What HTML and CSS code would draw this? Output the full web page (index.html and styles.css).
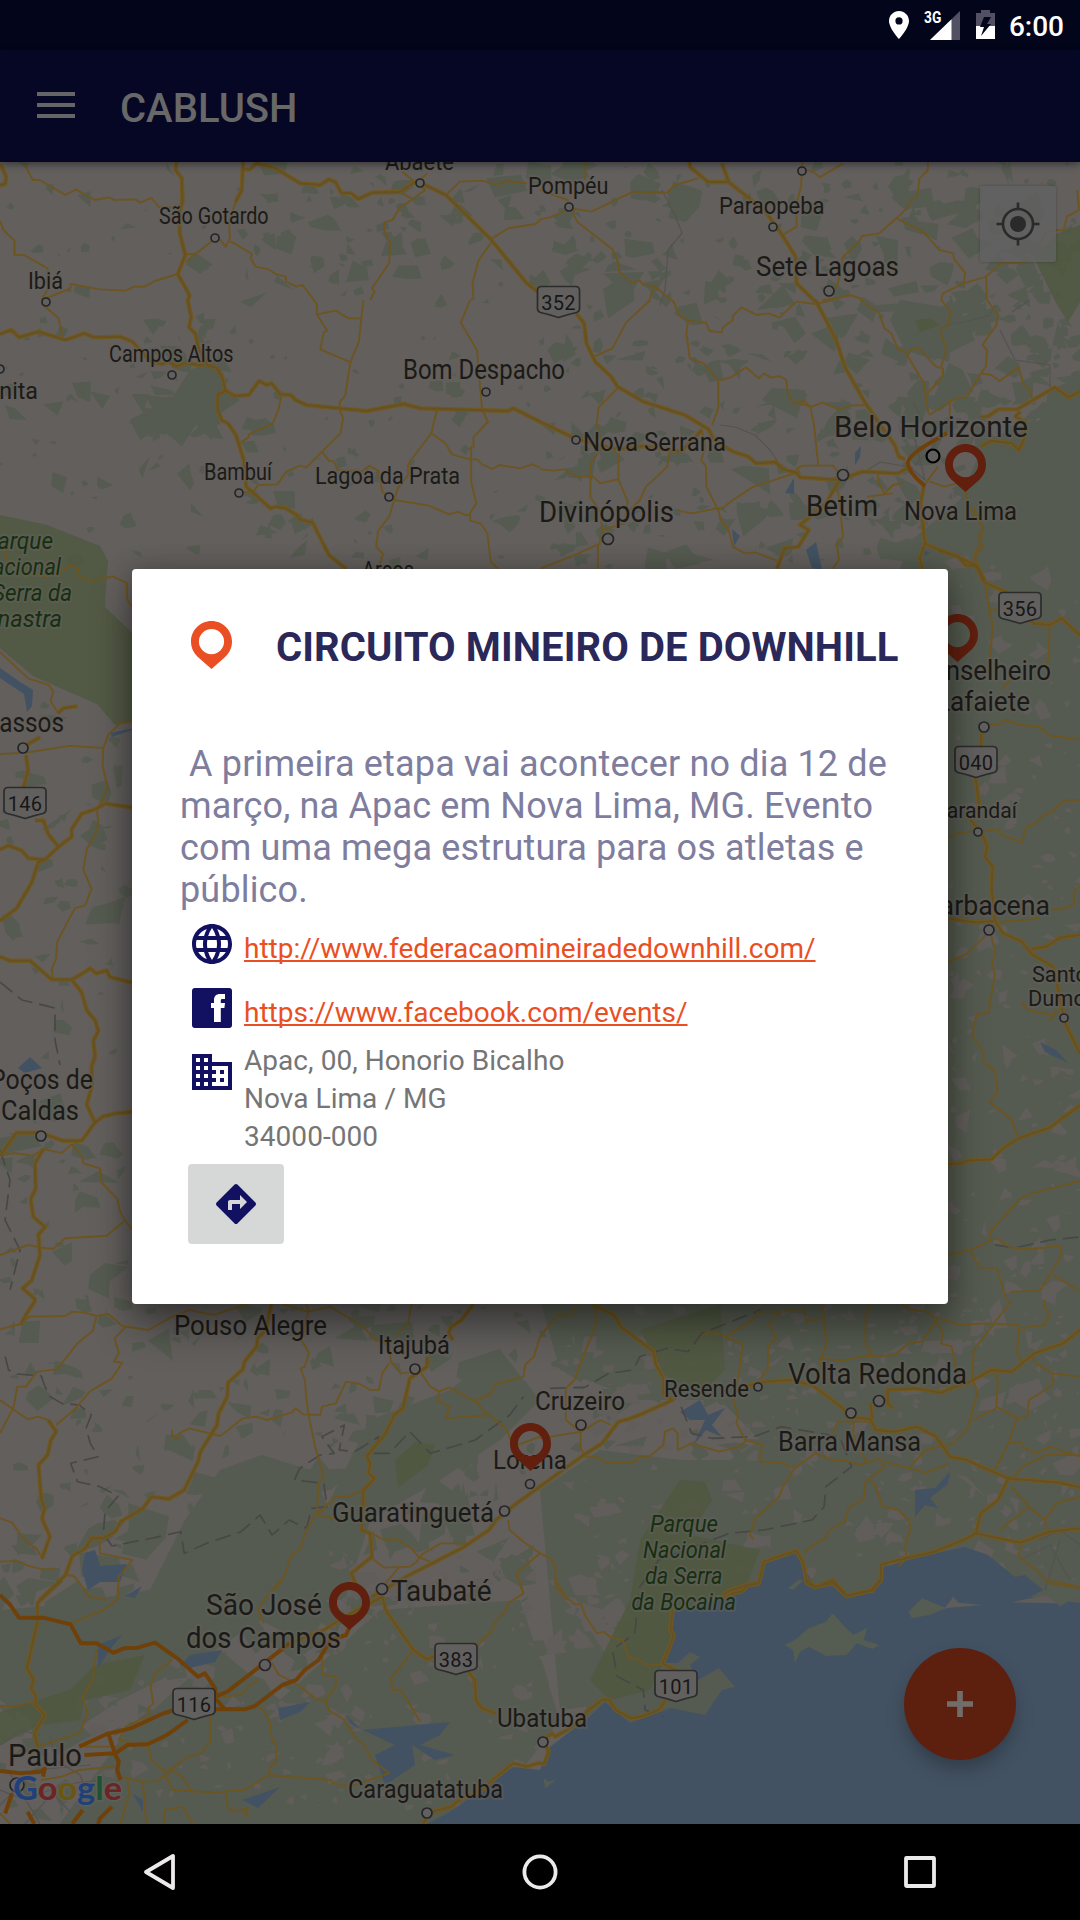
FILE: index.html
```html
<!DOCTYPE html>
<html lang="pt-BR">
<head>
<meta charset="utf-8">
<title>Cablush</title>
<link rel="stylesheet" href="styles.css">
</head>
<body>
<div class="screen">
  <header class="status-bar">
    <svg class="st-pin" viewBox="0 0 20 28"><path d="M10 0C4.5 0 0 4.4 0 9.900c0 7.200 10 18.100 10 18.100s10-10.900 10-18.100C20 4.400 15.500 0 10 0zm0 13.500a3.600 3.600 0 1 1 0-7.200 3.600 3.600 0 0 1 0 7.200z"/></svg>
    <div class="signal">
      <span class="net">3G</span>
      <svg viewBox="0 0 30 29"><path class="faint" d="M30 0v29H0z"/><path d="M21.500 8.200V29H0z"/></svg>
    </div>
    <svg class="battery" viewBox="0 0 19 29"><path class="faint" d="M0 3h5V0h9v3h5v13H0z"/><path d="M0 16h19v13H0z"/><path class="bolt" d="M8 7h7l-4 7h4L5 26l3-9H4z"/></svg>
    <span class="clock">6:00</span>
  </header>
  <header class="toolbar">
    <span class="menu"><i></i><i></i><i></i></span>
    <h1>CABLUSH</h1>
  </header>

  <main class="map">
    <svg class="map-canvas" viewBox="0 162 1080 1662">
      <defs>
        <path id="pin" fill-rule="evenodd" d="M0-48c-11.300 0-20.500 9.200-20.500 20.500 0 7.500 3.500 12.500 8 16.500L0 0l12.500-11c4.500-4 8-9 8-16.500C20.500-38.800 11.300-48 0-48zm0 8a12.600 12.600 0 1 1 0 25.200 12.600 12.600 0 0 1 0-25.200z"/>
        <path id="shield" d="M4 0H38Q42 0 42 4V22Q42 25 39 26Q30 28 21 31Q12 28 3 26Q0 25 0 22V4Q0 0 4 0Z"/>
        <g id="major-roads">
          <g transform="scale(.34439 .33333)">
            <path d="M0 490L18 530 15 552 0 556M512 486L510 510 528 535 530 605 520 640 522 700 538 765 516 822 550 885 545 905M706 486L702 570 684 605M702 508L725 508 745 490 800 505 872 550 930 555 955 538 975 547 990 578 1020 580 1040 597 1080 578 1160 576 1210 543M1210 543L1295 585 1425 718 1530 850 1568 880"/>
          </g>
          <g transform="translate(540 0) scale(.34439 .33333)">
            <path d="M435 486V500L488 546H548L528 490M548 546L655 635 700 700 742 770 745 850 800 905"/>
          </g>
          <g transform="translate(0 300) scale(.34439 .33333)">
            <path d="M0 102L32 90 56 112 112 95 190 120 245 100 272 112 350 110 385 125 410 155 440 185 470 192 490 185 512 200 535 190 585 195 603 180M545 0L555 50 549 82 568 102 575 140 603 195 630 205 645 230 655 272 632 285V330L645 362 662 370 685 405 708 480 715 560 785 625 800 620 830 625 862 645 868 657 908 668 955 765 1005 806M655 272L682 288 722 285 752 243 775 255 788 250 815 283 845 285 858 300 890 315 985 325 1065 333 1172 312 1220 325 1475 333 1490 325 1568 365"/>
          </g>
          <g transform="translate(540 300) scale(.34439 .33333)">
            <path d="M105 40L128 70 135 130 160 185 205 228 225 260 300 305 420 345 490 388 505 420 560 455 605 470 628 490 685 486 705 508 745 518 755 532 870 540 935 515 1040 520 1065 505M0 365L95 412 180 438 225 448 300 438 410 455 470 390M800 0L860 120 885 200 945 310 985 370 1030 435 1042 470 1060 478M870 540L830 610 755 675 780 690 750 740 710 745 688 806M1115 555L1105 610 1118 730 1170 755 1215 770 1235 795 1270 800 1290 840M1118 730L1103 775 1110 806M1280 350H1300L1330 328H1385L1495 262 1535 292 1568 275M1395 335L1380 350 1410 365 1405 420 1390 450 1370 430 1310 422 1280 440"/>
          </g>
          <g transform="translate(0 500) scale(.33333 .5102)">
            <path d="M80 480L120 465M78 500L84 530 70 565M105 628H130L145 655 175 680 215 660V645L245 615 290 605 315 595 420 605M175 680L135 705 115 710 95 750 50 800 0 825M0 685L25 677 65 687 85 702 135 705M0 895L30 903H90L155 940H215L255 925 270 918 290 928 320 922 330 935 390 945 420 950M215 940L245 965 260 1000 285 1020 295 1040 280 1060 285 1090 275 1110V1150L260 1185 285 1220 245 1256H190L120 1240 50 1240 0 1285M285 1220L310 1208 350 1202 420 1198M130 1272L105 1300 107 1350 92 1370 100 1405 135 1425 115 1440 120 1480 95 1530 68 1545 108 1568M175 418L190 408 232 404"/>
          </g>
          <g transform="translate(940 500) scale(.33333 .5102)">
            <path d="M0 98L40 108 110 128 135 162 215 185 280 242 330 245 365 232 420 265M125 450L122 490M107 545L117 595 110 620M90 625L130 660 142 680 135 700 158 718 155 760 165 825 190 850 245 865 275 890 340 915M275 880L320 875 360 858 420 852M160 825L105 828 25 820M340 915L355 960 375 1025 420 1085M25 1302L65 1300 80 1295 155 1292 190 1270 240 1250 330 1230 370 1210 420 1187M110 130L130 160"/>
          </g>
          <g transform="translate(0 1300) scale(.34439 .33333)">
            <path d="M103 0L75 45 60 75M788 12L772 90 748 115 745 140 710 185 705 208 662 248 660 290 635 340 630 375 582 455 575 485 535 570 490 597 440 590 415 625 350 665 335 695 300 715H265L248 745 210 768 190 825 115 900M140 360L163 395 148 420 138 465 112 495 120 600 130 625 122 655 145 710 122 775M1375 12L1340 60 1310 80 1303 100 1315 120M1240 170L1240 200 1190 235 1170 325 1145 345 1120 400 1065 468 1075 490 1070 520 1088 535 1055 570 1050 690 1075 700 1080 770 1020 820 1040 870M1568 560L1500 610 1440 660 1420 690 1340 745 1180 830 1080 890"/>
          </g>
          <g transform="translate(540 1300) scale(.34439 .33333)">
            <path d="M155 15L215 45 235 80 330 155 335 190 358 235V280L385 300 300 340 255 358 228 365 180 430 120 470 0 560M590 260L655 245 730 240 790 255 880 325 895 350 960 358 975 390 1030 395 1095 380 1150 410 1190 470 1240 480 1270 495 1360 535 1510 548 1568 562M1568 90L1520 130 1435 160 1370 215 1310 210 1240 250 1200 262 1165 278 1090 265 1045 268 1010 268V310L1025 325M1360 535L1330 600 1280 640 1265 700 1395 728 1480 695 1568 685M1265 700L1240 715 1145 755 1020 785 990 795V840L965 870 890 888 850 840 800 862 775 850 765 790 745 752 650 785 635 850 605 855 585 875 560 880 530 895M965 355L960 310"/>
          </g>
          <g transform="translate(0 1580) scale(.34439 .33333)">
            <path d="M180 0L108 70 110 120 78 265 98 300 90 325 103 345V375L130 405 100 460 110 500M1110 50L1120 90 1200 210 1240 238 1270 225M1360 275L1378 300 1382 360 1400 385 1440 400M1568 548L1530 560 1490 550 1430 600 1400 630 1340 655 1310 680 1240 700 1230 732M1110 50L1010 105 940 150 840 190"/>
          </g>
          <g transform="translate(540 1580) scale(.34439 .33333)">
            <path d="M385 90L378 150 388 165 375 205 355 250 395 270M365 360L345 390 300 408 265 415 220 390 200 358 180 360 135 395 110 430 45 470 35 460 10 480 25 515 12 552 0 550M530 45L555 30 600 15 635 12M775 0L800 20 850 10 890 48 965 30 985 0"/>
          </g>
        </g>
      </defs>

      <rect class="land" y="162" width="1080" height="1662"/>
      <g class="veg">
        <path d="M1080 380V1824H560L620 1560 700 1480 760 1440 660 1340 700 1304 948 1300V569L900 569 912 540 960 500 985 440 1040 420 1050 390Z"/>
        <path d="M185 1520L220 1470 262 1455 310 1470 340 1530 325 1600 300 1640 260 1620 200 1660 120 1700 60 1740 0 1700V1610L60 1605 150 1590Z"/>
        <path d="M330 1500L370 1420 450 1390 500 1350 540 1400 500 1440 440 1480 370 1520 345 1600 310 1600Z"/>
        <path d="M540 1300H720L740 1400 640 1400 560 1370ZM540 1490L600 1450 680 1460 760 1460 780 1500 740 1580 640 1700 560 1710Z"/>
        <path d="M60 1824L120 1740 220 1650 280 1700 380 1610 520 1600 560 1720 480 1824Z"/>
        <path d="M190 370L215 360 225 390 240 400 222 412 212 440 196 425 182 446 160 428 140 440 130 420 152 408 145 395 172 398Z"/>
        <path d="M900 300L960 310 975 340 935 360 905 350 890 320Z"/>
      </g>
      <g id="foliage"></g>
      <g class="park">
        <path d="M0 515L47 525 100 546 108 561 106 588 105 607 140 640V720L115 725 97 704 67 691 33 676 0 648Z"/>
        <path d="M1080 225L1056 234 1035 260 1056 303 1068 322 1080 302Z"/>
        <path d="M915 320L930 318 940 325 920 332Z"/>
        <path d="M640 1330L720 1304 725 1370 700 1395 665 1375Z"/>
        <path d="M395 1460L415 1442 435 1445 428 1465 398 1488Z"/>
        <path d="M145 1655L130 1690 85 1700 80 1720 40 1725 0 1745V1712L70 1690 95 1665Z"/>
        <path d="M680 1480L705 1482 712 1500 690 1535 760 1550 745 1590 700 1600 675 1640 650 1690 610 1700 590 1680 630 1600 640 1540Z"/>
      </g>
      <path class="water" d="M427 1824L448 1813 492 1783 513 1767 540 1770 550 1747 568 1733 586 1720 605 1702 630 1723 671 1708 705 1715 722 1690 735 1687 719 1668 698 1680 690 1665 700 1657 690 1652 678 1663 662 1663 673 1643V1613L726 1597 747 1583 762 1580 764 1563 795 1552 807 1573 815 1587 833 1580 846 1595 874 1593 884 1567 919 1557 965 1547 988 1555 1015 1577 1025 1575 1043 1590 1030 1597 1080 1603V1824Z"/>
      <g class="water">
        <path d="M85 1553L95 1550 100 1566 127 1564 120 1582 100 1582 88 1590 82 1570ZM125 1596L142 1586 135 1598Z"/>
        <path d="M98 1645L122 1635 112 1647 98 1668ZM180 1665L190 1655 222 1650 215 1662 190 1668ZM278 1708L310 1702 300 1712 280 1720Z"/>
        <path d="M345 1714L362 1730 450 1722 440 1735 420 1745 455 1755 435 1760 412 1745 415 1765 385 1785 375 1755 395 1745 352 1725ZM242 1800L280 1787 258 1808Z"/>
        <path d="M680 1412L700 1400 708 1415 725 1408 712 1425 722 1437 706 1430 694 1444 705 1420 690 1420ZM915 1490L935 1488 950 1472 948 1484 930 1498 938 1508 925 1505 915 1517Z"/>
        <path d="M0 668L20 682 33 690 32 706 27 712 24 694 0 678ZM18 1068L30 1057 42 1068 25 1073ZM110 733L140 727 112 737ZM1040 1042L1056 1050 1068 1063 1045 1052Z"/>
        <path d="M855 453L861 446 860 457 855 465ZM785 493L794 478V494ZM806 550L816 542 822 570 812 568ZM732 529L740 536 734 546ZM923 550L930 553 925 556ZM133 1794L143 1800V1812Z"/>
      </g>
      <g class="island" transform="translate(540 1580) scale(.34439 .33333)">
        <path d="M710 195L740 180 780 145 830 125 850 100 885 140 910 165 950 143 940 180 985 195 965 207 920 190 890 225 830 228 780 200 755 215 740 250 735 210ZM1070 95L1110 55 1180 85 1130 105 1080 115ZM10 595L25 605 48 598 15 625ZM720 25L750 0H765L735 30ZM1470 0H1568V40L1510 80 1500 65 1470 45Z"/>
        <path class="sand" d="M1175 85L1200 50 1215 68 1285 75ZM1368 67L1470 45 1505 70Z"/>
      </g>
      <g class="border">
        <g transform="translate(0 1300) scale(.34439 .33333)"><path d="M15 170L25 210 50 222 120 228 130 258 145 290 180 310 230 315 265 345 250 385 262 430 285 470 205 490 225 545 290 560 343 588 305 635 300 700 325 738 440 715 525 695 535 760 600 730 700 695 755 645 790 705 840 660 890 685 905 625 950 620 940 550 855 540 870 505 930 465 970 460 935 410 1000 375 985 450 1030 455 1100 410 1085 460H1130L1190 395 1250 460 1380 420 1480 345 1520 290"/></g>
        <g transform="translate(540 1300) scale(.34439 .33333)"><path d="M30 265L130 262 200 220 270 210 290 170 370 145 430 155 470 100 640 30M410 320L440 400 500 415 620 410 700 380 870 410 905 500 830 560 825 620 790 660 650 690 550 700 345 780 290 860 275 1000 210 1050 225 1130 300 1170 305 1230 360 1250"/></g>
        <path d="M0 982L22 1000 55 1008 55 1040 60 1065M0 1150L10 1180 5 1220 20 1250 10 1290M995 1245L1015 1248 1050 1240 1080 1237"/>
      </g>
      <g class="lane">
        <path d="M662 190L675 215 682 233 668 250 665 290 660 305M720 425L735 427 755 435 770 450 778 462M860 475L880 462 910 467 925 480 915 440M945 325L965 322 990 315 995 305M1000 330L1015 360 1050 365V390M1012 312L1030 300M913 402L935 445 915 465"/>
        <path d="M1 1745L20 1730 40 1735M50 1735L55 1760 80 1775 90 1800M0 1790L25 1800 50 1790 70 1812M8 1770L40 1824M0 1805L35 1770 90 1765M25 1824L60 1785 100 1780M1040 1540L1060 1530 1080 1545M1020 1560L1050 1545 1070 1580M1060 1540L1045 1590"/>
      </g>
      <g class="minor">
        <g transform="scale(.34439 .33333)"><path d="M70 490L95 540H115L190 585 220 568 275 600 318 592 332 600 392 598 408 608 440 594 462 622H520M0 662L10 690 42 722V765H70L138 805V870L120 900M122 900L205 865V852L290 868 365 872 390 860H420L450 843 516 822M684 605L665 670 668 715 655 740 640 720 625 715 540 785M540 762H568M668 725L680 730 732 762 728 775 742 800 780 808 800 822 830 830V845L860 860 878 855 912 900M1168 515L1235 570 1160 625 1140 660 1115 668V690L1133 730 1130 790 1080 865 1088 875 1075 900M1165 578L1195 595M1240 520L1215 545M1295 585L1335 545 1400 542 1440 553 1475 543 1530 550M1425 718L1475 685 1555 672 1568 660M1425 730L1390 780 1372 850 1375 900"/></g>
        <g transform="translate(540 0) scale(.34439 .33333)"><path d="M133 486L130 540M0 570L80 600 90 625 150 635 270 575 370 578 390 555 460 535M0 658L30 652 90 625 108 665 210 748 228 790 230 815 265 850 290 842 300 855 332 857 380 900M332 857L318 900M762 486L758 560 745 610V680L705 705M762 510L790 512 812 532 880 490M1126 486V510L1102 535 1095 590 1075 600 1065 625 1035 655 985 700 935 708 925 728 880 770 865 850 842 885M1035 655L1112 695 1160 750 1200 760 1202 775 1235 820 1230 850 1295 830 1340 788 1400 790 1440 755 1470 695 1500 690 1520 692 1530 650 1565 630 1560 570M1230 850L1170 880 1165 900M1295 830L1298 900M820 900L860 895 900 885 935 897"/></g>
        <g transform="translate(0 300) scale(.34439 .33333)"><path d="M120 10L170 55 183 115M910 0L920 12V43L975 32 1012 55H1047M1055 0L1042 125 1018 185 1002 288 987 305V333L997 355 988 400 935 455 890 502 870 497 832 515 805 553 750 555 735 575 705 577M920 43L950 92 940 97 930 148 1018 187M818 285L808 330 792 370 722 403V412L698 428M935 455L955 482 970 485 980 510 1050 515 1072 497 1098 512 1110 575 1145 600 1245 617 1305 643 1330 635 1350 645H1365M1365 0L1338 68 1385 150 1400 330 1417 365 1375 412V440H1368V545L1383 610 1365 640V662L1395 670 1415 700 1425 785 1445 806M1268 333L1252 400 1185 492V525L1155 565 1130 650 1098 692 1092 740 1112 762 1100 800M1252 400L1292 428 1312 463 1365 478 1385 478 1400 493 1430 507 1450 495 1510 505 1545 493 1568 503"/></g>
        <g transform="translate(540 300) scale(.34439 .33333)"><path d="M320 0L250 68 210 145 158 170M385 0L405 45 430 62 425 100 435 175 475 190 518 242V322L500 375M430 62L482 68 492 93 527 97 532 82 560 60V48L585 22 628 45 665 40 695 53 745 5 800 12 850 0M518 242L555 232 598 202 635 235 650 220 672 233 695 228 715 240 718 275 735 307 768 303 785 322 795 370 808 495M735 307L790 320 820 308 870 330 900 317 945 315M225 265L170 322 165 370 180 440 148 490 146 590 178 640 180 710 168 740V806M228 440V540L255 605 245 670 180 690M0 508L40 512 70 508 85 520 110 530H155L175 550 230 537M410 455L375 460 370 500 308 560 290 600 250 640M470 390L480 440 468 480 482 500 483 560 515 625 530 670 548 690 560 740 595 760 625 757 688 782M515 625L440 640 400 632M745 518L620 560 560 600 530 625 505 625M755 520L745 505 765 497H850L870 520M930 0L985 40 1000 85 1020 100 1040 148 1060 155 1115 250 1118 280 1128 340M1065 165L1080 145H1100L1150 200 1170 205V230L1120 285M1165 0L1192 35 1185 75 1162 90 1180 150 1165 200M1298 0L1330 45 1325 75 1285 135 1298 150 1295 200 1280 220 1240 290 1200 300 1130 345M1280 220L1310 225 1335 243 1390 200 1405 258 1420 265 1430 300M0 806L90 770 175 730M865 570L880 710 862 735 868 780 850 806M980 520L985 550 1000 580 1025 555 1055 548M1235 575L1250 630 1285 680 1280 730 1260 765 1270 800M1130 545L1175 560 1210 550M950 590L1025 580M1155 500L1120 550M1190 350V300"/></g>
        <g transform="translate(0 500) scale(.33333 .5102)"><path d="M0 80L22 115 60 140 140 150 185 140 210 128 235 135 238 150 275 158 340 150 380 163 382 195 395 210M0 298L85 350 145 362 160 375 152 395 175 418M0 498L80 495 210 482 310 486 325 460 360 438 420 432M310 486L308 520 323 565 305 590 290 605 295 630 290 650 260 685 250 725 275 762 255 795 225 800 200 830 172 865 168 900 155 920 158 935M0 1285L40 1280 100 1285 130 1272 185 1280 215 1263 245 1285 250 1300 300 1310 305 1338 352 1370 360 1395 375 1412 320 1442 195 1447 160 1468 120 1465 85 1460 0 1480M375 1412L420 1450"/></g>
        <g transform="translate(940 500) scale(.33333 .5102)"><path d="M100 15L130 55 115 75 130 90 105 110 135 160 148 215 158 245 147 340M148 215H180M185 370L215 350M130 440H180L195 430 235 440 300 445 330 462 420 470M420 588H380L360 595 340 610 315 615 285 635 260 640 245 672 180 655 175 645 130 650M25 662L55 653 110 648M420 757L402 765V792L370 802H335M25 905L80 890 150 845 167 890 155 910 165 930 150 985 145 1005 110 1008 95 1050 130 1080V1100L165 1120 172 1160 150 1180 215 1215 235 1250M245 985L265 1000 345 1010 350 1000 330 1020M300 820L170 828M420 1335L270 1360 240 1370 150 1435 155 1450 90 1470 120 1505H170L200 1568M25 1480L90 1470M165 1445L210 1465 270 1468 360 1462 365 1480 300 1550 210 1552M340 1520L420 1550M330 240L325 315 300 330"/></g>
        <g transform="translate(0 1300) scale(.34439 .33333)"><path d="M0 88L60 72 85 50 190 48 210 35 245 38 280 48 315 42 355 78 430 90 500 50 550 30 620 45 720 12M280 48L270 92 225 130 165 208 108 215 75 260H50L40 320 0 400M0 300L80 358 110 350 140 360M365 80L333 115 345 160 330 185 355 188 325 235 260 275 220 325 163 375M890 12L895 35 820 12M895 35L960 20 990 40 1050 75 1090 120 1130 130 1135 185 1165 220 1210 215M1195 12L1185 70 1150 105M895 35L875 120 897 158 885 200 873 205 885 240 890 300 897 350 915 440 940 530 925 550 920 640 890 690 870 750 845 765 825 830 798 870M640 408L705 355 745 350 775 360 848 337 858 325 880 343 930 345 935 320 975 310 1005 245 1045 252 1075 270H1100L1110 220 1130 190M640 408L550 385 520 400 515 418 500 410V390M1220 215L1250 260 1275 275 1270 300 1305 320 1295 355 1420 345M1275 275L1305 262 1380 305 1420 345 1470 385 1490 440 1568 410M1380 305L1425 280 1440 252 1520 230 1525 195 1550 170 1568 110M0 655L35 668 75 725 105 745 125 778M0 785L50 783 80 797 125 808 160 805M290 718V760L385 780 345 830 340 900M190 825L215 828 260 890 310 900M1075 770L1115 803 1190 800 1210 785 1225 763 1280 730H1360M1080 700L1115 720 1150 717 1195 745 1215 770 1260 790M1055 570L1010 590 975 590 920 645 1000 660M1475 660L1480 690 1520 725 1568 760 1500 820 1520 880M1160 800L1120 850"/></g>
        <g transform="translate(540 1300) scale(.34439 .33333)"><path d="M0 110L50 45 85 48 110 15M155 15L165 50 155 95 125 170 100 240 75 265V360L118 395V445L130 468M0 415L120 395 175 360 205 375M120 470L165 470 190 488H270L290 470 320 468 358 435 363 395 385 385 400 400V450L440 430 520 455 580 440 600 420 645 435 640 485 700 488 740 505 800 460 850 480 890 482 925 495 990 475M360 310L345 315M470 105L500 95 540 110 625 55 630 35 700 35M540 115L587 130 580 210 562 300 575 350 570 370 597 420M700 35L665 70 685 115 662 140V205L640 235M710 35L765 25 775 65 815 55M820 15L832 130 810 200M810 175L880 182 955 165 975 170 1030 165 1070 130 1110 125 1150 60M960 12L945 50V130L965 165 950 170M1050 12L1080 30 1125 35 1150 55 1180 60 1215 75 1300 70 1390 75 1395 85 1465 75 1480 40 1465 25V0M1150 60L1170 100 1165 130 1195 140 1210 210M1370 0L1260 150 1255 230 1270 280 1240 390 1200 430 1120 450 1075 500M1390 85L1385 160 1400 185M740 505L705 560 695 590 625 655 610 705 620 718M970 365L865 365 850 400M910 365V410L950 490M990 480L1000 500 945 545 940 595 895 625 885 665 835 695 830 715 800 730 765 760M955 545H970L995 620 1040 630 1070 660 1075 690 1060 740 1065 775 1040 800M1000 485L1120 518 1190 490M1320 510L1360 430 1385 355 1325 320 1330 240 1310 210M1385 355L1415 350 1420 300 1490 255V220L1440 190 1430 170M1255 360L1325 325M1490 220L1568 230M1360 430L1395 425 1400 440 1440 460 1480 440 1568 470M1370 540L1400 500 1470 465H1568M1370 560L1420 620 1465 660 1475 690M1420 620L1335 690M1465 660L1500 610 1568 590M1395 730L1390 770 1440 810 1480 850 1568 865M0 760L30 775 45 800V860L80 900"/></g>
        <g transform="translate(0 1580) scale(.34439 .33333)"><path d="M205 130L300 90 340 60 345 30M0 378H50L103 365M280 210L270 300 240 350 255 400 230 460 110 500 90 520M500 240L450 280 437 320 445 370 430 385 435 405 365 440 345 480 385 490 430 500 440 540 475 570 500 630 620 637 710 630 780 585 960 600 975 615 1020 618 1130 580 1080 540 1060 500 1030 470 1000 420 955 390 945 360 975 320V290L937 285 935 220M945 360L920 358 850 305 810 285 790 250M780 585L785 560 803 545 800 490 790 485 785 430 765 390 745 380M1200 210L1135 295 1140 330H1165L1220 425M655 637L662 685 680 695 720 685 710 700 725 710M610 400V485L585 520 545 530 485 575M1380 200L1430 150 1435 130 1470 90 1475 70 1520 40 1505 0M640 350L700 345 720 320 750 300M350 590L410 605 455 605 500 570 530 590 560 640M415 605L425 732M475 732L480 690 530 680 560 732M370 600L375 640 350 732M245 500L350 500M815 0L760 70 750 90 765 130M0 700L30 732M120 600L180 590 230 570 330 560"/></g>
        <g transform="translate(540 1580) scale(.34439 .33333)"><path d="M45 0L75 50 100 73H120L130 105 165 160 185 155 205 172 240 180 260 235 280 235 305 253H355M1475 0L1568 22"/></g>
      </g>
      <use class="major-edge" href="#major-roads"/>
      <use class="major-fill" href="#major-roads"/>
      <g class="highway" >
        <g transform="translate(0 1580) scale(.34439 .33333)"><path d="M0 45L30 75 55 113H125L205 133 235 190H280L330 218 360 205 400 203 450 188 515 235 575 290 595 280 625 325V355L655 390M840 190L760 255 660 335 625 350M505 390L470 402 380 445 310 462 230 500M245 525L335 520 370 495 430 492 485 465 545 420M625 388H710L740 378 820 315 860 300 885 270 925 240 960 180 1005 165 1015 140M315 462L335 525 345 545 340 570 350 600M325 680L290 715 285 732M0 573L60 580 120 575 130 565 125 590M35 640L15 700M80 695L100 732M240 690L210 732"/></g>
        <path d="M925 486Q908 472 908 463 908 455 935 440L947 433"/>
      </g>

      <g class="place" id="towns"></g>
      <g class="marker">
        <use href="#pin" x="965.500" y="492"/>
        <use href="#pin" x="957.500" y="662"/>
        <use href="#pin" x="530.500" y="1471"/>
        <use href="#pin" x="349.500" y="1630"/>
      </g>
      <g class="road-number">
        <use href="#shield" x="537.500" y="286.500"/><text x="558.500" y="310">352</text>
        <use href="#shield" x="999" y="592.500"/><text x="1020" y="616">356</text>
        <use href="#shield" x="955" y="746.500"/><text x="976" y="770">040</text>
        <use href="#shield" x="4" y="787.500"/><text x="25" y="811">146</text>
        <use href="#shield" x="435" y="1643.500"/><text x="456" y="1667">383</text>
        <use href="#shield" x="173" y="1688.500"/><text x="194" y="1712">116</text>
        <use href="#shield" x="655" y="1670.500"/><text x="676" y="1694">101</text>
      </g>
      <text class="google" x="13" y="1800" textLength="109" lengthAdjust="spacingAndGlyphs"><tspan class="g-blue">G</tspan><tspan class="g-red">o</tspan><tspan class="g-yellow">o</tspan><tspan class="g-blue">g</tspan><tspan class="g-green">l</tspan><tspan class="g-red">e</tspan></text>
    </svg>

    <button class="locate" aria-label="Minha localização">
      <svg viewBox="-22 -22 44 44"><circle class="ring" r="15"/><circle r="8"/><path d="M0-21.500v6M0 21.500v-6M-21.500 0h6M21.500 0h-6"/></svg>
    </button>
    <button class="fab" aria-label="Adicionar">
      <svg viewBox="0 0 26 26"><path d="M13 2.500v21M2.500 13h21"/></svg>
    </button>
  </main>

  <nav class="nav-bar">
    <svg viewBox="-24 -24 48 48"><path d="M-14 0L13-16V16Z"/></svg>
    <svg viewBox="-24 -24 48 48"><circle r="15.600"/></svg>
    <svg viewBox="-24 -24 48 48"><rect x="-14" y="-14" width="28" height="28" rx=".5"/></svg>
  </nav>

  <section class="dialog">
    <div class="dialog-head">
      <svg class="event-pin" viewBox="-20.500 -48 41 48"><use href="#pin"/></svg>
      <h2>CIRCUITO MINEIRO DE DOWNHILL</h2>
    </div>
    <p class="summary"> A primeira etapa vai acontecer no dia 12 de março, na Apac em Nova Lima, MG. Evento com uma mega estrutura para os atletas e público.</p>
    <div class="row">
      <svg class="icon" viewBox="0 0 24 24"><path d="M11.990 2C6.470 2 2 6.480 2 12s4.470 10 9.990 10C17.520 22 22 17.520 22 12S17.520 2 11.990 2zm6.930 6h-2.950c-.32-1.250-.78-2.450-1.380-3.560 1.840.63 3.370 1.910 4.330 3.560zM12 4.040c.83 1.200 1.480 2.530 1.910 3.960h-3.820c.43-1.430 1.080-2.760 1.910-3.960zM4.260 14C4.100 13.360 4 12.690 4 12s.1-1.360.26-2h3.380c-.08.66-.14 1.320-.14 2s.06 1.340.14 2H4.260zm.82 2h2.950c.32 1.250.78 2.450 1.380 3.560-1.840-.63-3.370-1.900-4.330-3.560zm2.950-8H5.080c.96-1.660 2.490-2.930 4.330-3.560C8.810 5.550 8.350 6.750 8.030 8zM12 19.960c-.83-1.200-1.480-2.530-1.910-3.960h3.820c-.43 1.430-1.080 2.760-1.910 3.960zM14.340 14H9.660c-.09-.66-.16-1.320-.16-2s.07-1.350.16-2h4.680c.09.65.16 1.320.16 2s-.07 1.340-.16 2zm.25 5.560c.6-1.110 1.060-2.310 1.380-3.560h2.950c-.96 1.650-2.490 2.930-4.330 3.560zM16.360 14c.08-.66.14-1.320.14-2s-.06-1.340-.14-2h3.380c.16.64.26 1.310.26 2s-.1 1.360-.26 2h-3.380z"/></svg>
      <a class="link">http://www.federacaomineiradedownhill.com/</a>
    </div>
    <div class="row">
      <svg class="icon" viewBox="0 0 24 24"><rect x="2" y="2" width="20" height="20" rx="1.500"/><path class="cut" d="M13 19v-7h-1.500V9.500H13V8c0-2 1.200-3 3-3h2.500v2.500h-1.300c-.6 0-.8.3-.8.9v1.100h2.100l-.3 2.500h-1.800v7z"/></svg>
      <a class="link">https://www.facebook.com/events/</a>
    </div>
    <div class="row address-row">
      <svg class="icon" viewBox="0 0 24 24"><path d="M12 7V3H2v18h20V7H12zM6 19H4v-2h2v2zm0-4H4v-2h2v2zm0-4H4V9h2v2zm0-4H4V5h2v2zm4 12H8v-2h2v2zm0-4H8v-2h2v2zm0-4H8V9h2v2zm0-4H8V5h2v2zm10 12h-8v-2h2v-2h-2v-2h2v-2h-2V9h8v10zm-2-8h-2v2h2v-2zm0 4h-2v2h2v-2z"/></svg>
      <address>Apac, 00, Honorio Bicalho<br>Nova Lima / MG<br>34000-000</address>
    </div>
    <button class="route" aria-label="Rotas">
      <svg class="icon" viewBox="0 0 24 24"><path d="M21.710 11.290l-9-9c-.39-.39-1.020-.39-1.410 0l-9 9c-.39.39-.39 1.020 0 1.410l9 9c.39.39 1.020.39 1.410 0l9-9c.39-.38.39-1.010 0-1.410zM14 14.500V12h-4v3H8v-4c0-.55.45-1 1-1h5V7.500l3.500 3.500-3.500 3.500z"/></svg>
    </button>
  </section>
</div>
<script src="map.js"></script>
</body>
</html>
```
FILE: styles.css
```css
* { box-sizing: border-box; }
body { margin: 0; background: #000; font-family: Roboto, "Liberation Sans", sans-serif; }
button { border: 0; padding: 0; }
h1, h2, p { margin: 0; }
.screen { position: relative; display: flex; flex-direction: column; width: 1080px; height: 1920px; overflow: hidden; }

.status-bar { height: 50px; flex: none; display: flex; align-items: flex-start; justify-content: flex-end; padding-right: 16px; background: #03051a; fill: #fff; color: #fff; }
.st-pin { width: 20px; height: 28px; margin: 11px 15px 0 0; }
.signal { position: relative; width: 36px; height: 40px; margin-right: 16px; }
.signal svg { position: absolute; left: 6px; top: 11px; width: 30px; height: 29px; }
.net { position: absolute; left: 0; top: 9px; font: 700 16px/18px Roboto, sans-serif; transform: scaleX(.86); transform-origin: 0 0; }
.faint { fill: #515163; }
.battery { width: 19px; height: 29px; margin: 10px 14px 0 0; }
.bolt { fill: #03051a; }
.clock { font-size: 28px; font-weight: 500; line-height: 54px; }

.toolbar { height: 112px; flex: none; display: flex; align-items: center; padding-left: 37px; background: #060725; box-shadow: 0 2px 8px rgba(0,0,0,.45); position: relative; z-index: 1; }
.menu { display: flex; flex-direction: column; gap: 7px; width: 38px; margin: -2px 45px 0 0; }
.menu i { height: 4px; background: #656567; }
.toolbar h1 { font-size: 40px; font-weight: 500; line-height: 48px; color: #686868; padding-top: 6px; }

.map { position: relative; height: 1662px; flex: none; overflow: hidden; }
.map-canvas { display: block; width: 1080px; height: 1662px; }
.land { fill: #625f5d; }
.veg { fill: #555b50; }
.bare { fill: #605d5a; }
.park { fill: #505840; opacity: .85; }
.water { fill: #435263; }
.island { fill: #555c52; }
.sand { fill: #5f5d5b; }
.minor path, .major-edge, .major-fill, .highway path, .lane, .border path { fill: none; stroke-linejoin: round; vector-effect: non-scaling-stroke; }
#major-roads path { vector-effect: non-scaling-stroke; }
.minor { stroke: #6d5521; stroke-width: 1.900; }
.major-edge { stroke: #71581f; stroke-width: 4.400; }
.major-fill { stroke: #645126; stroke-width: 2; }
.highway { stroke: #704009; stroke-width: 4; }
.lane { stroke: #55534f; stroke-width: 1.200; }
.border { fill: none; stroke: #474745; stroke-width: 1.600; stroke-dasharray: 16 7; }
.dot { fill: #62605e; stroke: #252529; stroke-width: 1.700; }
.dot.capital { stroke: #000; stroke-width: 2.200; }
.place text { fill: #1c1a16; paint-order: stroke; stroke: rgba(98,95,93,.55); stroke-width: 4px; stroke-linejoin: round; }
.place .park-name { fill: #162f10; font-style: italic; }
.marker { fill: #621f0e; }
.road-number use { fill: #62605f; stroke: #2c2c2c; stroke-width: 1.700; }
.road-number text { font-size: 20px; fill: #171717; text-anchor: middle; letter-spacing: .3px; }
.google { font: 700 33px Lato, sans-serif; paint-order: stroke; stroke: rgba(100,98,96,.6); stroke-width: 3px; }
.g-blue { fill: #20407b; }
.g-red { fill: #6c2424; }
.g-yellow { fill: #6b560f; }
.g-green { fill: #1f5230; }

.locate { position: absolute; left: 980px; top: 24px; width: 76px; height: 76px; display: grid; place-items: center; border-radius: 2px; background: rgba(98,98,98,.82); box-shadow: 0 0 3px rgba(0,0,0,.25); }
.locate svg { width: 44px; height: 44px; fill: #2a2a2a; stroke: #2a2a2a; stroke-width: 0; }
.locate path { stroke-width: 2.600; }
.locate .ring { fill: none; stroke-width: 2.600; }
.fab { position: absolute; left: 904px; top: 1486px; width: 112px; height: 112px; border-radius: 50%; display: grid; place-items: center; background: #5d200f; box-shadow: 0 10px 18px rgba(0,0,0,.25); }
.fab svg { width: 26px; height: 26px; fill: none; stroke: #716d6b; stroke-width: 5.600; stroke-linecap: square; }

.nav-bar { flex: 1; background: #000; display: grid; grid-template-columns: 48px 48px 48px; justify-content: space-between; padding: 0 136px; align-items: center; }
.nav-bar svg { width: 48px; height: 48px; fill: none; stroke: #eceaea; stroke-width: 3.800; stroke-linejoin: round; }

.dialog { position: absolute; z-index: 2; left: 132px; top: 569px; width: 816px; height: 735px; padding: 52px 48px 0; border-radius: 4px; background: #fff; box-shadow: 0 22px 40px rgba(0,0,0,.38), 0 0 26px rgba(0,0,0,.22); }
.dialog-head { display: flex; align-items: flex-start; height: 117px; padding-left: 11px; }
.event-pin { width: 41px; height: 48px; fill: #ea4f23; flex: none; margin-right: 44px; }
.dialog h2 { font-size: 40px; font-weight: 700; line-height: 48px; letter-spacing: .1px; color: #2a2859; white-space: nowrap; padding-top: 3px; }
.summary { font-size: 36px; line-height: 42px; letter-spacing: .16px; color: #7e7d9e; white-space: pre-wrap; height: 182px; padding-top: 5px; width: 716px; }
.row { display: flex; height: 64px; padding-left: 8px; }
.icon { width: 48px; height: 48px; fill: #121060; flex: none; }
.cut { fill: #fff; }
.link { margin: 11px 0 0 8px; font-size: 28px; line-height: 36px; color: #ea4f23; text-decoration: underline; text-decoration-thickness: 2px; text-underline-offset: 2px; text-decoration-skip-ink: none; }
.address-row { height: 116px; }
.row address { margin: -6px 0 0 8px; font-size: 28px; line-height: 38px; letter-spacing: .05px; font-style: normal; color: #757575; }
.route { display: grid; place-items: center; width: 96px; height: 80px; margin-left: 8px; border-radius: 4px; background: #d6d7d7; }
```
FILE: map.js
```js
const NS = 'http://www.w3.org/2000/svg';

function add(parent, tag, attrs, text) {
  const el = document.createElementNS(NS, tag);
  for (const k in attrs) el.setAttribute(k, attrs[k]);
  if (text) el.textContent = text;
  parent.appendChild(el);
}

// Town labels: name, left, right, baseline, font size
const towns = [
  ['Abaeté', 385, 454, 169.5, 24], ['Pompéu', 528, 608.5, 194, 24], ['São Gotardo', 159, 268.6, 224.3, 23],
  ['Ibiá', 28, 63, 289, 24], ['Paraopeba', 719, 824.5, 214, 24], ['Sete Lagoas', 756, 899, 275.5, 27],
  ['Campos Altos', 109, 233.5, 361.5, 23], ['enita', -13, 38, 399, 23], ['Bom Despacho', 403, 565, 378.5, 27],
  ['Bambuí', 204, 272, 479.5, 23], ['Lagoa da Prata', 315, 460, 484.3, 24], ['Arcos', 362, 414, 578, 23],
  ['Nova Serrana', 583, 726, 450.5, 26], ['Divinópolis', 539, 674, 521.7, 29], ['Belo Horizonte', 834, 1028, 436.5, 30],
  ['Betim', 806, 878, 515.5, 29], ['Nova Lima', 904, 1017, 520, 26], ['Conselheiro', 914, 1051, 680, 27],
  ['Lafaiete', 936, 1030, 711, 27], ['Carandaí', 933, 1017, 817.5, 22], ['Barbacena', 923, 1050, 914.5, 27],
  ['Santos', 1032, 1099, 982, 22], ['Dumont', 1028, 1105, 1005.5, 22], ['Passos', -16, 64, 732, 27],
  ['Poços de', -10, 93, 1089, 27], ['Caldas', 1, 79, 1120, 27], ['Pouso Alegre', 174, 327, 1334.7, 27],
  ['Itajubá', 378, 450, 1353.5, 26], ['Cruzeiro', 535, 625, 1410, 26], ['Resende', 664, 749, 1396.7, 24],
  ['Volta Redonda', 788, 967, 1383.5, 29], ['Barra Mansa', 778, 921, 1451, 27], ['Lorena', 493, 567, 1469, 26],
  ['Guaratinguetá', 332, 494, 1522, 27], ['Taubaté', 391, 491.5, 1601, 29], ['São José', 206, 322, 1615, 29],
  ['dos Campos', 186, 341, 1648, 29], ['Paulo', 8, 82, 1766, 31], ['Ubatuba', 497, 587, 1727, 26],
  ['Caraguatatuba', 348, 503, 1798, 26]
];
const parks = [
  ['Parque', -16, 53, 549, 24], ['Nacional', -22, 61, 575, 24], ['Serra da', -8, 72, 601, 24], ['Canastra', -30, 62, 627, 24],
  ['Parque', 650, 718, 1532, 24], ['Nacional', 643, 726, 1558, 24], ['da Serra', 645, 722.5, 1584, 24], ['da Bocaina', 631.5, 736, 1610, 24]
];
// Town dots: x, y, radius
const dots = [
  [420,183,4],[569,207,4],[215,238,4],[46,302,4],[773,227,4],[802,171,4],[829,291,5],[172,375,4],[0,369,4],[486,392,4],
  [239,493,4],[389,497,4],[576,440,4],[608,539,5.5],[843,475,5.5],[933,456,6.5],[23,748,5],[41,1136,5],[984,727,5],[978,832,4],
  [989,930,5],[1064,1018,4],[415,1369,5],[581,1425,5],[530,1484,4.5],[504.5,1511,5],[382,1589,5.5],[758,1387,4],[851,1413,5],
  [879,1401,5.5],[265,1665,5.5],[427,1813,5],[543,1742,5],[17,1785,7]
];

const layer = document.getElementById('towns');
for (const [cx, cy, r] of dots) add(layer, 'circle', { class: r === 6.5 ? 'dot capital' : 'dot', cx, cy, r });
for (const [name, x0, x1, y, size] of towns) {
  add(layer, 'text', { x: x0, y, 'font-size': size, textLength: x1 - x0, lengthAdjust: 'spacingAndGlyphs' }, name);
}
for (const [name, x0, x1, y, size] of parks) {
  add(layer, 'text', { class: 'park-name', x: x0, y, 'font-size': size, textLength: x1 - x0, lengthAdjust: 'spacingAndGlyphs' }, name);
}

// Scattered vegetation and clearings; the seed keeps every load identical
let seed = 20160312;
const rnd = () => (seed = (seed * 1103515245 + 12345) & 0x7fffffff) / 0x7fffffff;
const foliage = document.getElementById('foliage');
function scatter(cls, x, y, w, h, count, size) {
  let d = '';
  for (let i = 0; i < count; i++) {
    const cx = x + rnd() * w, cy = y + rnd() * h, n = 3 + Math.floor(rnd() * 4), s = size * (.3 + rnd() * rnd() * 1.6);
    for (let j = 0; j < n; j++) {
      const a = (j + rnd() * .9) / n * Math.PI * 2, q = s * (.35 + rnd());
      d += (j ? 'L' : 'M') + (cx + Math.cos(a) * q).toFixed(1) + ' ' + (cy + Math.sin(a) * q * .85).toFixed(1);
    }
    d += 'Z';
  }
  add(foliage, 'path', { class: cls, d });
}
scatter('veg', 0, 162, 260, 400, 75, 9);
scatter('veg', 250, 162, 290, 150, 70, 13);
scatter('veg', 250, 310, 290, 260, 65, 9);
scatter('veg', 130, 320, 100, 120, 45, 12);
scatter('veg', 540, 162, 540, 410, 420, 13);
scatter('veg', 900, 200, 180, 370, 120, 16);
scatter('veg', 0, 700, 132, 600, 75, 14);
scatter('veg', 0, 1300, 540, 220, 140, 14);
scatter('veg', 0, 1500, 540, 324, 240, 18);
scatter('veg', 540, 1300, 540, 300, 170, 14);
scatter('bare', 948, 560, 132, 760, 140, 10);
scatter('bare', 560, 1304, 520, 280, 300, 10);
scatter('bare', 80, 1660, 460, 150, 130, 9);
scatter('bare', 330, 1540, 220, 120, 50, 10);
scatter('bare', 550, 1580, 70, 70, 25, 16);
```
